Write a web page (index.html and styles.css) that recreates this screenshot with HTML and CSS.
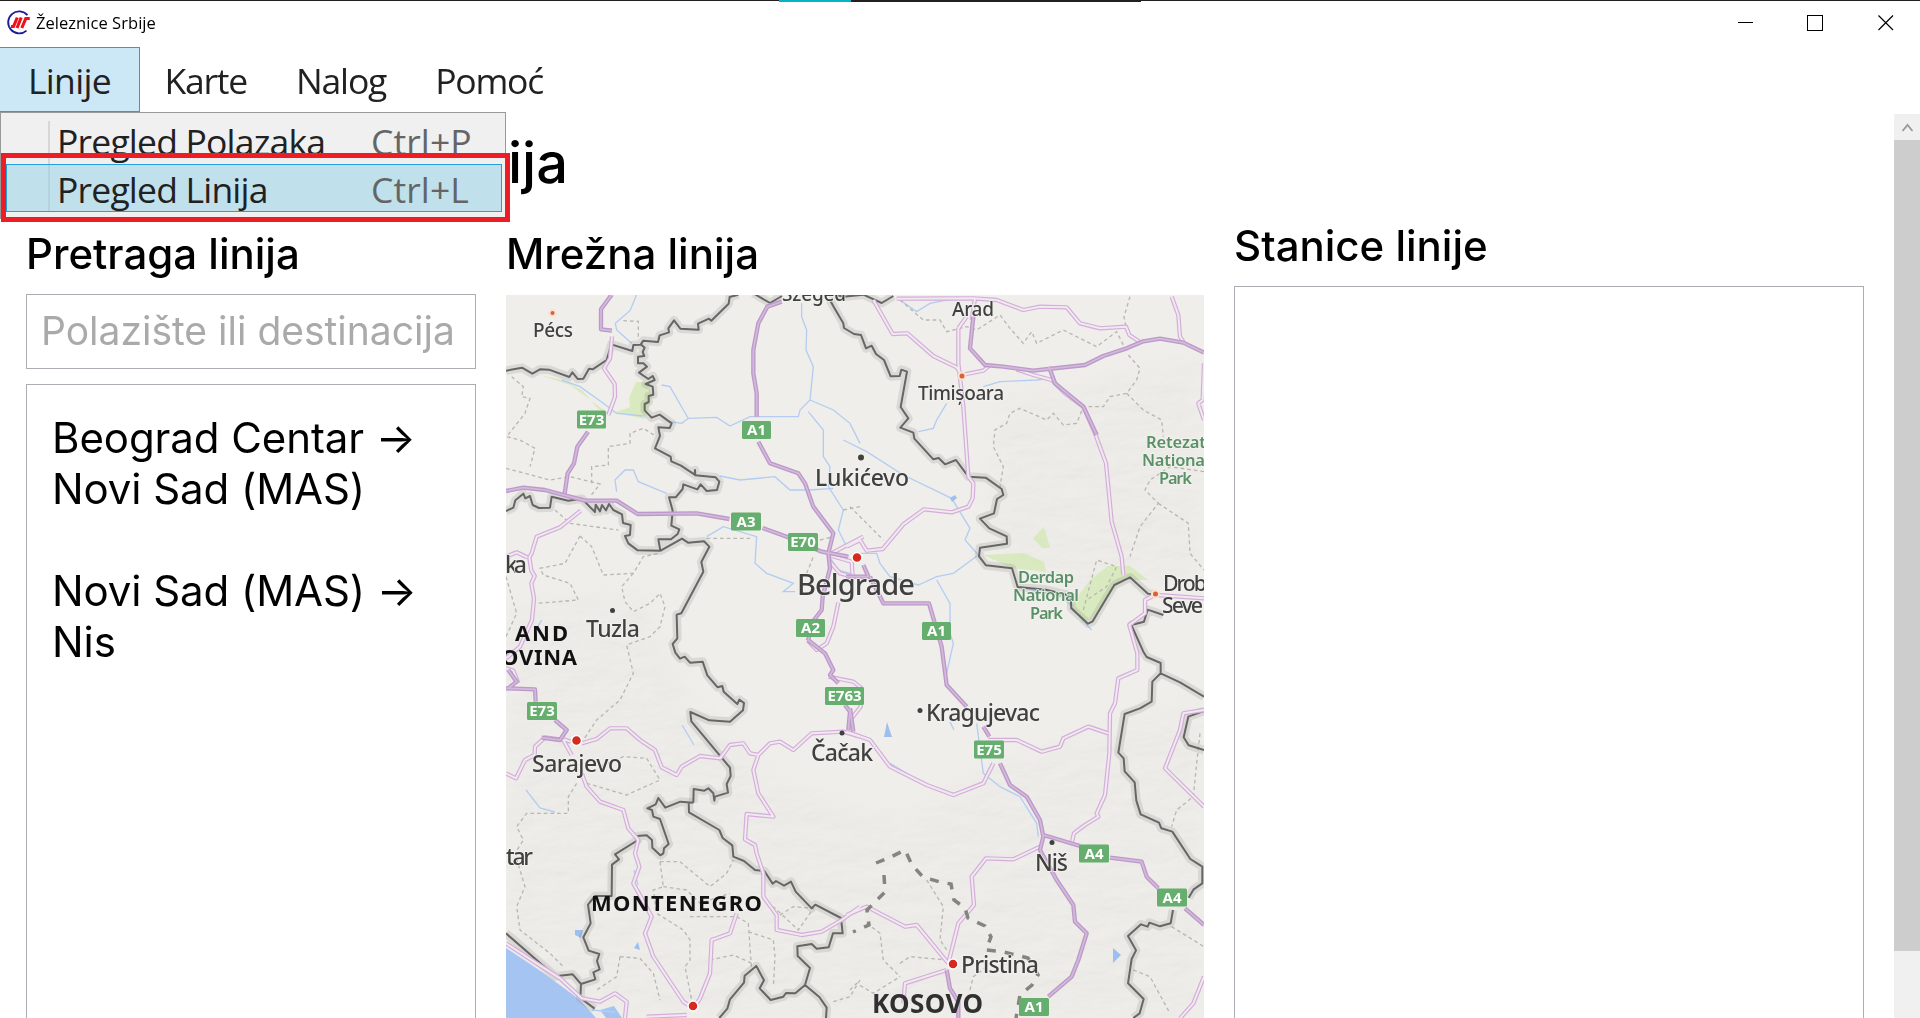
FILE: index.html
```html
<!DOCTYPE html>
<html lang="sr-Latn">
<head>
<meta charset="utf-8">
<title>Železnice Srbije</title>
<link rel="stylesheet" href="styles.css">
</head>
<body>
<div class="window">
  <header class="titlebar">
    <svg class="logo" width="26" height="26" viewBox="0 0 26 26">
      <path d="M21.5 5.2A11 11 0 1 0 20.500 20.600" fill="none" stroke="#1c1c94" stroke-width="1.900"/>
      <path d="M5 16.500h2.500l3.800-9M11 18l4.200-10.500M15.800 18l4-9.500h4" fill="none" stroke="#f01018" stroke-width="3.100"/>
    </svg>
    <span class="app-name">Železnice Srbije</span>
    <svg class="controls" width="160" height="18" viewBox="0 0 160 18" shape-rendering="crispEdges">
      <path d="M0 8.500h15M69.500 1.500h14.500v14.500h-14.500z" fill="none" stroke="#000"/>
      <path d="M140.500 1.500l14.500 14.500M155 1.500l-14.500 14.500" fill="none" stroke="#000" shape-rendering="auto" stroke-width="1.200"/>
    </svg>
    <span class="desktop-edge"></span>
  </header>
  <nav class="menubar">
    <div class="menu-item open"><span>Linije</span>
      <div class="dropdown">
        <div class="entry"><span class="label">Pregled Polazaka</span><span class="key">Ctrl+P</span></div>
        <div class="entry active"><span class="label">Pregled Linija</span><span class="key">Ctrl+L</span></div>
      </div>
      <div class="marker"></div>
    </div>
    <div class="menu-item">Karte</div>
    <div class="menu-item">Nalog</div>
    <div class="menu-item">Pomoć</div>
  </nav>
  <div class="body">
    <main class="page">
      <h1>linija</h1>
      <div class="columns">
        <section class="search">
          <h2>Pretraga linija</h2>
          <div class="input">Polazište ili destinacija</div>
          <div class="list">
            <p>Beograd Centar →<br>Novi Sad (MAS)</p>
            <p>Novi Sad (MAS) →<br>Nis</p>
          </div>
        </section>
        <section class="network">
          <h2>Mrežna linija</h2>
          <svg class="map" width="698" height="723" viewBox="506 295 698 723">
            <defs>
              <filter id="relief" x="0" y="0" width="100%" height="100%">
                <feTurbulence type="fractalNoise" baseFrequency=".025 .055" numOctaves="4" seed="7"/>
                <feDiffuseLighting lighting-color="#fff" surfaceScale="1.600"><feDistantLight azimuth="235" elevation="62"/></feDiffuseLighting>
              </filter>
              <filter id="soft"><feGaussianBlur stdDeviation="12"/></filter>
              <mask id="hills" maskUnits="userSpaceOnUse" x="506" y="295" width="698" height="723">
                <g fill="#fff" filter="url(#soft)">
                  <path d="M506 610L640 590 690 700 780 780 900 820 1000 760 1204 700V1018H506zM1000 400L1204 360V580L1060 590 985 540z"/>
                </g>
              </mask>
              <g id="borders">
                <g transform="translate(500 280) scale(.33333)">
                  <path d="M18 272L66 263 97 281 120 268 147 269 208 291 217 277 233 297 250 296 267 266 278 268 320 240 334 193 397 213 400 195 422 194 430 182 474 186 479 166 507 157 505 145 522 121 541 146 596 149 594 131 627 116 634 122 686 71 689 51 715 44M424 194L434 203 428 216 433 228 414 230 414 250 430 250 441 260 417 278 445 297 458 288 464 300 437 312 458 320 460 344 446 348 446 366 434 372 434 391 455 413 479 404 515 430 509 444 475 442 480 468 465 505 512 530 514 544 543 557 584 584 585 570 586 586 647 592 658 605 651 630 620 633 602 613 592 628 550 613 548 627 527 652 507 652 518 692 514 737 538 748 533 762 513 778 475 778 481 812M18 693L40 683 46 661 70 641 76 655 90 648 98 675 117 684 150 683 155 650 205 662 245 656 285 696 287 674 300 694 306 675 318 691 327 672 340 690 366 703 369 729 392 735 390 765 375 768 385 790 413 811 482 812 546 776 564 788 612 784 628 800 604 846 610 875 544 1000 530 1004 532 1075 518 1092 526 1118 540 1136 554 1130 570 1148 608 1145 622 1186 653 1222 667 1218 671 1235 712 1272 718 1259 732 1269 729 1291 690 1325 628 1321 571 1296 574 1324 690 1463 692 1488 680 1512 684 1538 645 1550 643 1562 640 1540 625 1525 613 1532 581 1527 580 1568"/>
                </g>
                <g transform="translate(500 640) scale(.33333)">
                  <path d="M580 488L541 485 496 503 475 474 467 493 442 505 456 510 460 530 480 537 506 612 492 625 490 640 481 646 457 623 456 600 440 586 412 588 414 600 345 643 357 658 336 674 335 768 285 768 264 794 272 850 250 892 266 932 298 942 291 963 299 988 280 997 286 1018 243 1032 218 1003 166 1009 18 880M243 1032L241 1074 284 1106M566 488L567 517 658 570 668 594 697 616 700 650 732 663 765 690 793 693 818 731 828 723 852 737 873 725 887 755 935 805 946 794 1023 834 1028 880 999 880 986 922 950 926 935 912 892 919 893 948 930 984 915 1035 958 1071 980 1103 978 1134M915 1035L886 1060 858 1059 850 1070 812 1080 779 1045 792 1021 769 978 734 1007 732 1028 690 1078 682 1106 658 1134"/>
                </g>
                <g transform="translate(850 280) scale(.33333)">
                  <path d="M-290 40L-240 69 -204 48M-60 40L-20 50 40 44 95 69 130 48M-60 60L-50 79 -20 130 -18 144 12 162 33 165 48 205 65 197 78 222 102 240 122 289 149 288 154 269 171 275 152 381 175 415 151 443 190 458 193 476 250 538 266 534 285 553 318 540 355 590 407 593 455 627 460 645 441 657 432 700 390 716 418 745 470 769 471 791 390 803 387 829 408 856 486 865 503 921 588 929 662 947 664 985 714 1031 728 1024 770 953 793 915 840 892 894 941 916 942M940 1005L893 989 882 1025 844 1035 880 1115 890 1131 932 1149 932 1180 990 1207 1062 1250M932 1180L907 1205 905 1265 870 1285 824 1302 805 1418 821 1435 824 1474 854 1507 859 1562 872 1603 927 1628 934 1645 967 1655 1021 1737 1057 1760 1057 1810 1031 1828 1016 1853M969 1890L962 1930 930 1939 898 1928 893 1940 873 1933 834 1968 858 2011 845 2037 834 2110 881 2157 869 2200 850 2214M1062 1293L1015 1310 1001 1372 1016 1396 1062 1410"/>
                </g>
              </g>
              <g id="roads">
                <g transform="translate(500 280) scale(.33333)">
                  <path d="M336 170L330 235 312 265 344 312 345 350 325 405M242 692L180 742 110 770 95 820 88 832 94 872 104 888 94 910 102 955 96 1020 60 1100 18 1135M18 830L50 817 82 832M18 1165L40 1172 55 1210M180 1375L212 1385M985 825L1090 770M985 825L1055 845 1058 890 1020 880 990 845M1015 968L1000 1040 980 1090 950 1110 924 1082M985 1190L1060 1205 1085 1225 1082 1280 1055 1315"/>
                </g>
                <g transform="translate(850 280) scale(.33333)">
                  <path d="M70 60L128 162 172 160 250 228 320 262 335 285 400 272 418 257M325 145L325 250 340 380 355 590 370 610 368 655 355 680 305 697 222 688 160 733 98 807 50 812 30 780 -10 800M350 110L325 145M375 55L365 120M500 268L550 285 605 300 645 340 700 380 735 460 768 550 785 725 815 830 820 885M140 56L370 55 440 60 520 90 570 80 650 82 690 130 750 145 828 140 838 165 870 186M965 50L985 105 990 170 1000 185M1062 250L1058 360 1045 370 1062 420M920 945L1062 955M915 945L885 960 885 1000 838 1035 862 1120 862 1170 805 1195 795 1270 780 1300 778 1420 765 1545 740 1600 745 1610 705 1635 672 1660 665 1690M775 1360L715 1340 640 1375 630 1400 575 1415 500 1380 415 1380M430 1450L400 1510 310 1545 230 1515 120 1460 60 1380 -10 1355M570 1700L490 1738 408 1735 365 1790 372 1875 325 1930 295 2050M-10 1905L50 1880 165 1940 200 1935 295 2050M1062 1290L1000 1300 990 1350 945 1465 1062 1580M290 2070L165 2110 160 2170M1062 2090L1030 2170 990 2215"/>
                </g>
                <g transform="translate(500 640) scale(.33333)">
                  <path d="M18 400L48 415 75 360 104 345 105 320 135 292 190 300 215 345M245 310L290 297 330 265 380 265 420 300 435 310 465 330 485 382 530 405 545 380 600 348 660 355 690 315 730 310 750 340 775 345 810 310 840 305 880 330 935 280 1030 275 1080 290M775 345L760 390 775 460 820 530 740 522 735 598 765 615 770 640 790 700 790 770 830 825 830 870 905 885 965 875 1025 840 1080 800M245 400L260 440 300 485 370 510 385 565 415 600 405 640 418 680 400 730 455 830 435 880 460 950 550 1085 580 1105 600 1075 630 1000 635 900 690 880 710 820M18 910L110 970 180 1015 245 1075 300 1085 345 1060 380 1085 375 1134M440 1130L560 1125"/>
                </g>
              </g>
              <g id="motorways">
                <g transform="translate(500 280) scale(.33333)">
                  <path d="M335 44L303 88 303 148 336 152M845 65L802 80 775 130 760 210 760 280 770 340 770 410M775 485L810 550 895 580 915 610 940 680 1000 760 985 820M264 455L232 500 222 550 203 580 194 640M18 633L70 623 135 630 255 662 350 662 413 702 590 700 688 717M788 744L860 770 965 815 1045 830M985 820L990 865 968 950 965 990 942 1020 924 1082"/>
                </g>
                <g transform="translate(850 280) scale(.33333)">
                  <path d="M370 110L360 205 405 255 460 260 550 272 705 255 760 228 830 205 880 184 930 176 1000 188 1062 218M597 260L615 310 700 380 740 465M40 855L55 890 -12 890M60 890L100 970 237 970 275 1100 290 1215 350 1280M400 1340L418 1370M450 1450L480 1515 530 1550 570 1620 580 1670 570 1710 620 1800 670 1875 675 1925 710 1960 685 2040 665 2090 595 2150M580 1665L690 1698M780 1733L875 1745 890 1790 925 1825M1005 1885L1062 1935M290 2070L300 2125 325 2165 325 2214M0 1285L10 1355"/>
                </g>
                <g transform="translate(500 640) scale(.33333)">
                  <path d="M18 145L105 148 107 185M25 90L50 125 25 145M165 240L200 270 180 300 125 293M924 0L975 40 1000 90 990 105 1015 130M1035 195L1050 215 1045 270"/>
                </g>
              </g>
            </defs>
            <rect x="506" y="295" width="698" height="723" fill="#efeeea"/>
            <rect x="506" y="295" width="698" height="723" filter="url(#relief)" mask="url(#hills)" class="relief"/>
            <g class="park">
              <path d="M540 375L563 380 583 391 598 409 610 414 630 407 629 398 636 382 646 382 653 395 645 419 622 414 605 411 585 396 570 385z"/>
              <path d="M983 555L1024 553 1044 562 1046 572 1012 568zM1033 538L1044 527 1050 548 1042 548zM1072 604L1090 580 1108 566 1130 566 1148 580 1120 580 1092 619 1082 623z"/>
            </g>
            <path class="sea" d="M506 948L545 974 580 1000 596 1018H506zM600 1010l14-4 8 12h-16z"/>
            <g class="river">
              <g transform="translate(500 280) scale(.33333)">
                <path d="M410 44L390 92 346 130 350 150 395 190M905 70L905 110 920 150 918 210 940 260 930 360 900 390 895 410 750 410 690 438 650 412 565 415 545 430 510 425M485 315L510 320 550 390 565 415M930 360L1000 390 1050 430 1080 490M925 395L970 450 970 530 990 560 985 620 1030 690 1015 750 1040 800M660 588L720 600 825 590 870 630 930 630 1000 625M350 635L345 600 375 570 400 570 415 605 500 640M620 770L670 740 770 770 765 850 800 880 880 910 850 935 885 935M185 300L240 320 310 370 350 400 430 408"/>
                <path d="M985 825L1015 870 1080 890M125 1020L110 1045"/>
              </g>
              <g transform="translate(850 280) scale(.33333)">
                <path d="M-20 480L50 515 160 585 305 655 360 745 345 780 385 825 310 880 260 890 205 915 120 890 90 850 80 820 10 820M150 60L200 95 240 70 300 58M290 370L260 420 250 445 205 455M400 320L450 305 560 300 600 295M260 900L300 970 300 1060 310 1090 290 1180M380 1330L400 1480 450 1520 510 1550 560 1630 565 1670M120 1450L220 1510 310 1540M500 920L640 950 715 1040 725 1050"/>
              </g>
              <path d="M526 790L540 808 555 812M682 725L694 745M634 870L638 885M950 722l4 8M592 1010L615 1012"/>
            </g>
            <g class="lake"><path d="M887 722l5 15h-8zM1113 948l8 7-8 8zM575 930h8l-2 8-6-3zM638 942l2 8-6-2zM950 498l5-3 2 3-5 4z"/></g>
            <g class="district">
              <g transform="translate(500 280) scale(.33333)">
                <path d="M35 290L70 320 65 350 90 355 75 400 20 470 60 480 105 505 90 560M18 565L150 600 210 590 300 612 270 650M275 610L275 560 325 555 325 500 390 490 390 460 430 445 470 470M370 122L415 124 415 180M165 690L210 730 355 750M240 768L195 850 120 865 130 885 210 910 235 960 110 970M240 768L275 800 310 885 400 880 430 830 475 820M400 880L365 920 375 965 400 995 450 970 480 940 495 980 480 1040 450 1070 380 1095 400 1180 360 1260 290 1320 250 1380M18 890L50 1000 18 1070M620 775L750 775M920 880L940 830M960 780L1000 770M1030 690L1080 680"/>
              </g>
              <g transform="translate(850 280) scale(.33333)">
                <path d="M150 60L220 120 270 120 290 155 350 140 380 150 450 105 480 145 520 190 545 155 560 190 640 150 740 200 800 155 820 195M840 50L822 110 830 150M835 225L870 265 860 300 830 340 780 350 760 380 700 380 680 430 640 435 610 400 590 420 510 385 480 400 470 430 435 450 430 500 460 560 450 620M830 340L880 390 935 420 940 470M1062 575L960 560 900 600 885 630 925 670 870 740 840 830M925 670L1015 730 1020 820 1062 870M0 680L100 780M700 990L740 840 800 860 770 920 710 960M1050 1360L1040 1450 1030 1550 980 1590 965 1640M965 1940L1062 2000M850 2070L900 2090 960 2200M230 1800L280 1880 270 1980 290 2010M50 1930L90 1960 100 2040 150 2090M150 2050L180 2030 290 2040M0 2130L20 2110 70 2140 150 2090M360 2130L370 2090 410 2060"/>
              </g>
              <g transform="translate(500 640) scale(.33333)">
                <path d="M260 430L380 465 480 420 440 355 370 350 300 380M230 430L205 470 205 520 80 520 50 560 70 600 45 640 75 740 50 800 60 870 150 940 190 980M480 665L540 665 630 740 680 700 700 660M480 665L490 740 460 750 470 820 550 870 570 900 570 960 555 980 575 1080M490 740L560 750 600 790 690 760M570 830L710 830 745 850 755 990M360 950L420 955 460 1000 480 1080M360 950L350 1010 290 1050M840 825L880 800 940 805 895 870 820 800M745 875L820 900 825 950 820 1040M630 960L700 945 755 970M1000 1085L1050 1070 1080 1020"/>
              </g>
            </g>
            <use href="#borders" class="border-halo"/>
            <use href="#borders" class="border-line"/>
            <use href="#roads" class="road-case"/>
            <use href="#roads" class="road-core"/>
            <use href="#motorways" class="motor-case"/>
            <use href="#motorways" class="motor-core"/>
            <path class="disputed" d="M876 863L891 857 905 850 912 865 923 877 940 882 951 884 954 900 965 908 968 918 985 926 991 937 986 950 1004 952 1028 958 1038 975 1032 985 1020 995 1016 1018M884 875L885 892 875 902 867 910 869 925 853 932"/>
            <g class="city">
              <circle cx="857" cy="557.500" r="5"/><circle cx="576.500" cy="740.500" r="5"/><circle cx="693" cy="1006" r="5"/><circle cx="953" cy="964" r="5"/>
            </g>
            <g class="minor"><circle cx="552.500" cy="313" r="3"/><circle cx="962" cy="376" r="3.500"/><circle cx="1155.500" cy="594" r="3.500"/></g>
            <g class="dot"><circle cx="861" cy="457.500" r="3"/><circle cx="612.500" cy="610.500" r="2.500"/><circle cx="842" cy="733" r="2.500"/><circle cx="920" cy="710.500" r="2.500"/><circle cx="1052" cy="842.500" r="2.500"/></g>
            <g class="town">
              <text x="533" y="337" textLength="40">Pécs</text>
              <text x="782" y="301" textLength="64">Szeged</text>
              <text x="952" y="316" textLength="42">Arad</text>
              <text x="918" y="400" textLength="86">Timișoara</text>
            </g>
            <g class="town big">
              <text x="815" y="486" textLength="94">Lukićevo</text>
              <text x="586" y="637" textLength="54">Tuzla</text>
              <text x="505" y="573" textLength="22">ka</text>
              <text x="532" y="772" textLength="90">Sarajevo</text>
              <text x="811" y="761" textLength="62">Čačak</text>
              <text x="926" y="721" textLength="114">Kragujevac</text>
              <text x="1035" y="871" textLength="33">Niš</text>
              <text x="506" y="865" textLength="27">tar</text>
              <text x="961" y="973" textLength="78">Pristina</text>
              <text x="1163" y="591" textLength="44" class="tight">Drob</text>
              <text x="1162" y="613" textLength="41" class="tight">Seve</text>
            </g>
            <text x="797" y="595" textLength="118" class="capital">Belgrade</text>
            <g class="country">
              <text x="515" y="641" textLength="53">AND</text>
              <text x="501" y="665" textLength="76">OVINA</text>
              <text x="591" y="911" textLength="171">MONTENEGRO</text>
              <text x="872" y="1013" textLength="111" class="kosovo">KOSOVO</text>
            </g>
            <g class="park-name">
              <text x="1146" y="448" textLength="60">Retezat</text><text x="1142" y="466" textLength="63">Nationa</text><text x="1159" y="484" textLength="33">Park</text>
              <text x="1018" y="583" textLength="56">Derdap</text><text x="1013" y="601" textLength="66">National</text><text x="1030" y="619" textLength="33">Park</text>
            </g>
            <g class="shield">
              <rect x="577" y="410.500" width="29" height="18" rx="1.500"/><rect x="742" y="421" width="29" height="18" rx="1.500"/><rect x="731" y="512.500" width="30" height="18" rx="1.500"/><rect x="788" y="533" width="30" height="18" rx="1.500"/><rect x="796" y="619" width="29" height="18" rx="1.500"/><rect x="922" y="622" width="29" height="18" rx="1.500"/><rect x="527" y="702" width="30" height="18" rx="1.500"/><rect x="825" y="687" width="39" height="18" rx="1.500"/><rect x="974" y="740.500" width="30" height="18" rx="1.500"/><rect x="1079" y="844.500" width="30" height="18" rx="1.500"/><rect x="1157" y="888.500" width="30" height="18" rx="1.500"/><rect x="1019" y="998" width="30" height="18" rx="1.500"/>
            </g>
            <g class="shield-text">
              <text x="591.500" y="424.500">E73</text><text x="756.500" y="435">A1</text><text x="746" y="526.500">A3</text><text x="803" y="547">E70</text><text x="810.500" y="633">A2</text><text x="936.500" y="636">A1</text><text x="542" y="716">E73</text><text x="844.500" y="701">E763</text><text x="989" y="754.500">E75</text><text x="1094" y="858.500">A4</text><text x="1172" y="902.500">A4</text><text x="1034" y="1012">A1</text>
            </g>
          </svg>
        </section>
        <section class="stations">
          <h2>Stanice linije</h2>
          <div class="station-list"></div>
        </section>
      </div>
    </main>
    <aside class="scrollbar">
      <svg width="26" height="26" viewBox="0 0 26 26"><path d="M8.500 17L13.500 11 18.500 17" fill="none" stroke="#999" stroke-width="1.800"/></svg>
      <div class="thumb"></div>
    </aside>
  </div>
</div>
</body>
</html>
```
FILE: styles.css
```css
* { box-sizing: border-box; }
body { margin: 0; background: #fff; color: #000; font-family: Inter, "Liberation Sans", sans-serif; }
.window { display: flex; flex-direction: column; width: 1920px; height: 1018px; overflow: hidden; }

.titlebar { position: relative; display: flex; align-items: center; height: 47px; padding: 0 22px 3px 6px; border-top: 1px solid #231f20; font-family: "Open Sans", "Noto Sans", sans-serif; }
.app-name { margin-left: 4px; font-size: 16.500px; letter-spacing: .05px; }
.controls { margin-left: auto; }
.desktop-edge { position: absolute; top: -1px; left: 779px; width: 362px; height: 2px; background: linear-gradient(90deg, #00b7c3 0 72px, #231f20 72px); }

.menubar { display: flex; height: 65px; font-family: "Open Sans", "Noto Sans", sans-serif; font-size: 35.500px; line-height: 67px; color: #212121; }
.menu-item { position: relative; height: 64px; padding: 0 24.500px; letter-spacing: -1.200px; }
.menu-item.open { width: 140px; height: 65px; padding-left: 28px; line-height: 65px; letter-spacing: -.700px; background: #cce8f6; border: 1px solid #26a0da; border-left: 0; }
.dropdown { position: absolute; z-index: 2; top: 64px; left: 0; width: 506px; height: 107px; padding: 3px; background: #f0f0f0 linear-gradient(#d7d7d7, #d7d7d7) 47px 8px / 2px 90px no-repeat; border: 1px solid #999; }
.entry { display: flex; height: 48px; margin-left: 2px; padding-left: 50px; border: 1px solid transparent; line-height: 49px; }
.entry .label { width: 314px; letter-spacing: -.800px; }
.entry .key { color: #656565; letter-spacing: .1px; }
.entry.active { background: rgba(143, 207, 231, .5); border-color: #26a0da; color: #212121; }
.marker { position: absolute; z-index: 3; top: 105px; left: 1px; width: 509px; height: 69px; border: 5px solid #ee1c24; }

.body { display: flex; flex: 1; min-height: 0; padding-top: 2px; }
.page { flex: 1; min-width: 0; padding: 0 30px 0 26px; }
h1 { width: 542px; height: 104px; margin: 0; text-align: right; font-weight: 500; font-size: 56px; line-height: 99px; }
h2 { margin: 0; font-weight: 500; font-size: 42px; line-height: 36px; white-space: nowrap; }
.columns { display: flex; height: 800px; }
.search { display: flex; flex-direction: column; width: 450px; margin-right: 30px; padding-top: 18px; }
.search h2, .network h2 { height: 58px; }
.input { height: 75px; padding-left: 14px; border: 1px solid #abadb3; color: #aaa; font-size: 39px; line-height: 71px; white-space: nowrap; }
.list { flex: 1; margin-top: 15px; padding: 27px 0 0 25px; border: 1px solid #abadb3; border-bottom: 0; font-size: 42px; line-height: 51px; letter-spacing: -.080px; white-space: nowrap; }
.list p { margin: 0 0 51px; }
.network { width: 698px; margin-right: 30px; padding-top: 18px; }
.map { display: block; margin-top: 1px; overflow: hidden; }
.network h2 { height: 58px; }
.stations { flex: 1; padding-top: 10px; }
.stations h2 { height: 58px; }
.station-list { height: 760px; border: 1px solid #abadb3; }
.scrollbar { display: flex; flex-direction: column; width: 26px; background: #f0f0f0; }
.thumb { height: 811px; background: #cdcdcd; }

.relief { opacity: .22; mix-blend-mode: multiply; }
.park { fill: #d5e8b5; opacity: .8; }
.sea { fill: #a6c4f1; }
.lake { fill: #9dbff0; }
.river { fill: none; stroke: #b3cdf2; stroke-width: 4; }
.river > path { stroke-width: 1.300; }
.district { fill: none; stroke: #b9b7b1; stroke-width: 4; stroke-dasharray: 11 9; }
.border-halo { fill: none; stroke: #6e6e68; stroke-opacity: .16; stroke-width: 26; stroke-linejoin: round; }
.border-line { fill: none; stroke: #666; stroke-width: 6; stroke-linejoin: round; }
.road-case, .road-core, .motor-case, .motor-core { fill: none; stroke-linejoin: round; }
.road-case { stroke: #d5acdb; stroke-width: 13; }
.road-core { stroke: #efeaee; stroke-width: 6; }
.motor-case { stroke: #bd98cb; stroke-width: 13; }
.motor-core { stroke: #d2bbd9; stroke-width: 5; }
.disputed { fill: none; stroke: #85857f; stroke-width: 3.500; stroke-dasharray: 9 9; }
.city { fill: #d6291f; stroke: #fff; stroke-width: 1.500; }
.minor { fill: #d6623c; stroke: #fbe0cf; stroke-width: 2; }
.dot { fill: #404040; }
.town, .capital { font-family: "Noto Sans", sans-serif; font-weight: 500; font-size: 19px; fill: #404040; stroke: #f4f3f0; stroke-width: 1.500px; paint-order: stroke; }
.big { font-size: 23px; }
.tight { font-size: 21.500px; }
.capital { font-size: 29px; }
.country { font-family: "Noto Sans", sans-serif; font-weight: 700; font-size: 22px; fill: #111; }
.kosovo { font-size: 26px; fill: #303030; }
.park-name { font-family: "Noto Sans", sans-serif; font-weight: 600; font-size: 16.500px; fill: #5a9067; stroke: #f4f3f0; stroke-width: 1.500px; paint-order: stroke; }
.shield { fill: #66ae6e; }
.shield-text { font-family: "Noto Sans", sans-serif; font-weight: 700; font-size: 15px; fill: #fff; text-anchor: middle; }
```
